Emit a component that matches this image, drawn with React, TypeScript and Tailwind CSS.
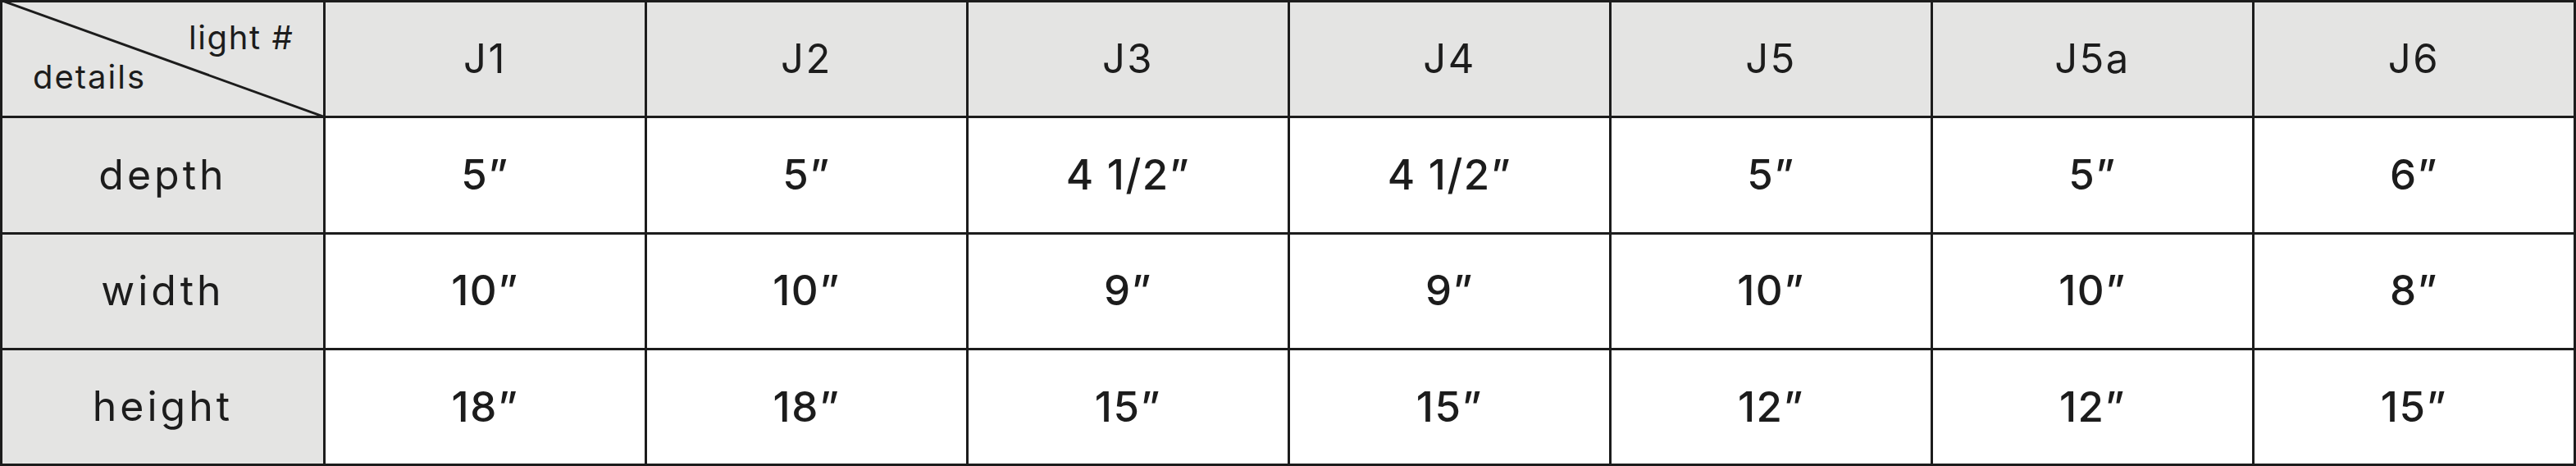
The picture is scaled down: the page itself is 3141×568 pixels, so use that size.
import React from 'react';

const lights = ['J1', 'J2', 'J3', 'J4', 'J5', 'J5a', 'J6'];

const rows = [
  { label: 'depth', values: ['5”', '5”', '4 1/2”', '4 1/2”', '5”', '5”', '6”'] },
  { label: 'width', values: ['10”', '10”', '9”', '9”', '10”', '10”', '8”'] },
  { label: 'height', values: ['18”', '18”', '15”', '15”', '12”', '12”', '15”'] },
];

export default function App() {
  return (
    <div
      className="w-[3141px] h-[568px] bg-[#1c1c1c] p-[3px] grid grid-cols-[391px_repeat(7,389px)] grid-rows-4 gap-[3px] text-[#1c1c1c]"
      style={{ fontFamily: 'Inter, "Open Sans", sans-serif' }}
    >
      {/* corner cell */}
      <div className="relative bg-[#e4e4e3] overflow-visible">
        <svg className="absolute -left-[3px] -top-[3px] w-[397px] h-[143px]" viewBox="0 0 397 143">
          <line x1="0" y1="0" x2="397" y2="143" stroke="#1c1c1c" strokeWidth="3" />
        </svg>
        <span className="absolute left-[227px] top-[23px] text-[40px] leading-none tracking-[0.04em]">light #</span>
        <span className="absolute left-[37px] top-[71px] text-[40px] leading-none tracking-[0.05em]">details</span>
      </div>
      {lights.map((l) => (
        <div key={l} className="bg-[#e4e4e3] flex items-center justify-center text-[49px] tracking-[0.05em]">
          {l}
        </div>
      ))}
      {rows.map((r) => (
        <React.Fragment key={r.label}>
          <div className="bg-[#e4e4e3] flex items-center justify-center text-[50px] tracking-[0.08em]">{r.label}</div>
          {r.values.map((v, i) => (
            <div key={i} className="bg-white flex items-center justify-center text-[51px] font-medium tracking-[0.03em]">
              {v}
            </div>
          ))}
        </React.Fragment>
      ))}
    </div>
  );
}
